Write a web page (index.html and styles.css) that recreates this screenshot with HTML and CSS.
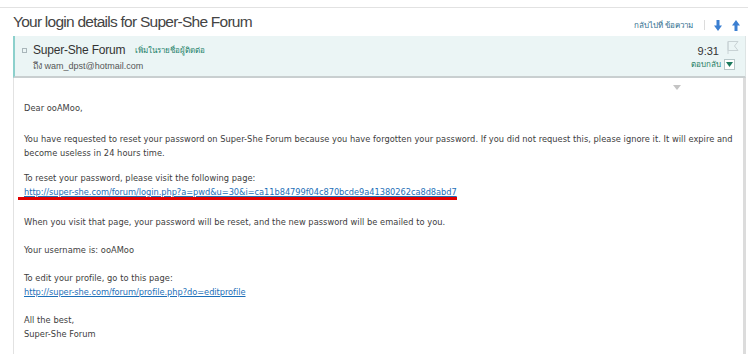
FILE: index.html
```html
<!DOCTYPE html>
<html lang="en">
<head>
    <meta charset="UTF-8">
    <title>Your login details for Super-She Forum</title>
    <link rel="stylesheet" href="styles.css">
</head>
<body>
    <div class="toolbar"></div>

    <div class="title-row">
        <h1 class="subject">Your login details for Super-She Forum</h1>
        <div class="nav">
            <a class="back">กลับไปที่ ข้อความ</a>
            <span class="sep"></span>
            <svg class="arrow" width="8" height="11" viewBox="0 0 8 11"><path d="M2.5 0h3v5.5H8L4 11 0 5.5h2.5z" fill="#3b7fd1"/></svg>
            <svg class="arrow" width="8" height="11" viewBox="0 0 8 11"><path d="M2.5 11h3V5.5H8L4 0 0 5.5h2.5z" fill="#3b7fd1"/></svg>
        </div>
    </div>

    <div class="message">
        <div class="msg-head">
            <div class="sender">
                <div class="from">
                    <span class="from-icon"></span>
                    <span class="from-name">Super-She Forum</span>
                    <a class="add-contact">เพิ่มในรายชื่อผู้ติดต่อ</a>
                </div>
                <div class="to">ถึง wam_dpst@hotmail.com</div>
            </div>
            <div class="meta">
                <div class="time-row">
                    <span class="time">9:31</span>
                    <svg class="flag" width="12" height="13" viewBox="0 0 12 13"><path d="M1 .5h10L7.5 5 11 9.5H1z M1 .5V13" fill="none" stroke="#c8d2d4"/></svg>
                </div>
                <div class="reply-row">
                    <a class="reply">ตอบกลับ</a>
                    <span class="reply-menu"><svg width="7" height="5" viewBox="0 0 7 5"><path d="M0 0h7L3.5 5z" fill="#1b7a5e"/></svg></span>
                </div>
            </div>
        </div>

        <div class="msg-body">
            <div class="expander"><svg width="8" height="5" viewBox="0 0 8 5"><path d="M0 0h8L4 5z" fill="#c4c4c4"/></svg></div>
            <p class="first">Dear ooAMoo,</p>
            <p class="long">You have requested to reset your password on Super-She Forum because you have forgotten your password. If you did not request this, please ignore it. It will expire and become useless in 24 hours time.</p>
            <p class="reset">To reset your password, please visit the following page:<br>
                <a class="link marked" href="#">http://super-she.com/forum/login.php?a=pwd&amp;u=30&amp;i=ca11b84799f04c870bcde9a41380262ca8d8abd7</a></p>
            <p>When you visit that page, your password will be reset, and the new password will be emailed to you.</p>
            <p>Your username is: ooAMoo</p>
            <p>To edit your profile, go to this page:<br>
                <a class="link" href="#">http://super-she.com/forum/profile.php?do=editprofile</a></p>
            <p class="sign">All the best,<br>Super-She Forum</p>
        </div>
    </div>
</body>
</html>
```

FILE: styles.css
```css
* { margin: 0; padding: 0; box-sizing: border-box; }
body {
    font-family: "Open Sans", "Noto Sans", "DejaVu Sans", sans-serif;
    background: #fff;
    color: #333;
    width: 748px;
    height: 354px;
    overflow: hidden;
}
a { text-decoration: none; }

.toolbar {
    height: 8px;
    border-bottom: 1px solid #e2e2e2;
}

.title-row {
    display: flex;
    align-items: center;
    justify-content: space-between;
    height: 28px;
    padding: 0 8px 0 13px;
}
.subject {
    font-family: "Liberation Sans", sans-serif;
    font-weight: normal;
    font-size: 15.5px;
    letter-spacing: -0.75px;
    color: #444;
}
.nav {
    display: flex;
    align-items: center;
    font-size: 8px;
    margin-top: 6px;
}
.back { color: #2e6e8e; }
.sep {
    width: 1px;
    height: 10px;
    background: #dcdcdc;
    margin: 0 9px 0 11px;
}
.arrow { display: block; }
.arrow + .arrow { margin-left: 10px; }

.message {
    margin-left: 13px;
    margin-right: 2px;
}

.msg-head {
    display: flex;
    justify-content: space-between;
    background: #ebf5f5;
    border-left: 2px solid #8cd0cc;
    border-bottom: 2px solid #c9cfd0;
    border-right: 1px solid #dde4e4;
    height: 42px;
    padding: 5px 10px 0 7px;
}
.from {
    display: flex;
    align-items: center;
    gap: 6px;
    height: 16px;
    margin-top: 1px;
}
.from-icon {
    width: 5px;
    height: 5px;
    border: 1px solid #a9b6ba;
}
.from-name {
    font-family: "Liberation Sans", sans-serif;
    font-size: 12px;
    letter-spacing: -0.2px;
    color: #333;
}
.add-contact {
    font-size: 8px;
    color: #1b7f68;
    margin-left: 4px;
}
.to {
    font-family: "Liberation Sans", sans-serif;
    font-size: 9px;
    color: #555;
    padding-left: 11px;
    margin-top: 1px;
}
.meta {
    display: flex;
    flex-direction: column;
    align-items: flex-end;
    gap: 1px;
}
.time-row {
    display: flex;
    align-items: flex-start;
    gap: 8px;
    margin-right: -4px;
}
.time {
    font-family: "Liberation Sans", sans-serif;
    font-size: 11px;
    color: #333;
    margin-top: 4px;
}
.reply-row {
    display: flex;
    align-items: center;
    gap: 3px;
}
.reply {
    font-size: 8px;
    color: #1b7a5e;
}
.reply-menu {
    display: flex;
    align-items: center;
    justify-content: center;
    width: 11px;
    height: 11px;
    border: 1px solid #b6c6c8;
    background: #fff;
}

.msg-body {
    position: relative;
    border-left: 1px solid #e2e2e2;
    border-right: 3px solid #dcdcdc;
    height: 280px;
    padding: 23px 5px 0 10px;
    font-family: "DejaVu Sans Condensed", "Liberation Sans", sans-serif;
    font-size: 9.2px;
    letter-spacing: 0.04px;
    line-height: 14px;
    color: #3d3d3d;
}
.expander {
    position: absolute;
    top: 2px;
    right: 62px;
}
.msg-body p { margin-bottom: 14px; }
.msg-body p.first { margin-bottom: 17px; }
.msg-body p.long { margin-bottom: 11px; }
.msg-body p.reset { margin-bottom: 15px; }
.msg-body p.sign { margin-top: 14px; }
.link {
    color: #1d6fb8;
    text-decoration: underline;
    letter-spacing: -0.05px;
}
.marked {
    border-bottom: 3px solid #e00000;
    margin-left: -6px;
    padding-left: 6px;
    line-height: 11px;
    display: inline-block;
}
```
